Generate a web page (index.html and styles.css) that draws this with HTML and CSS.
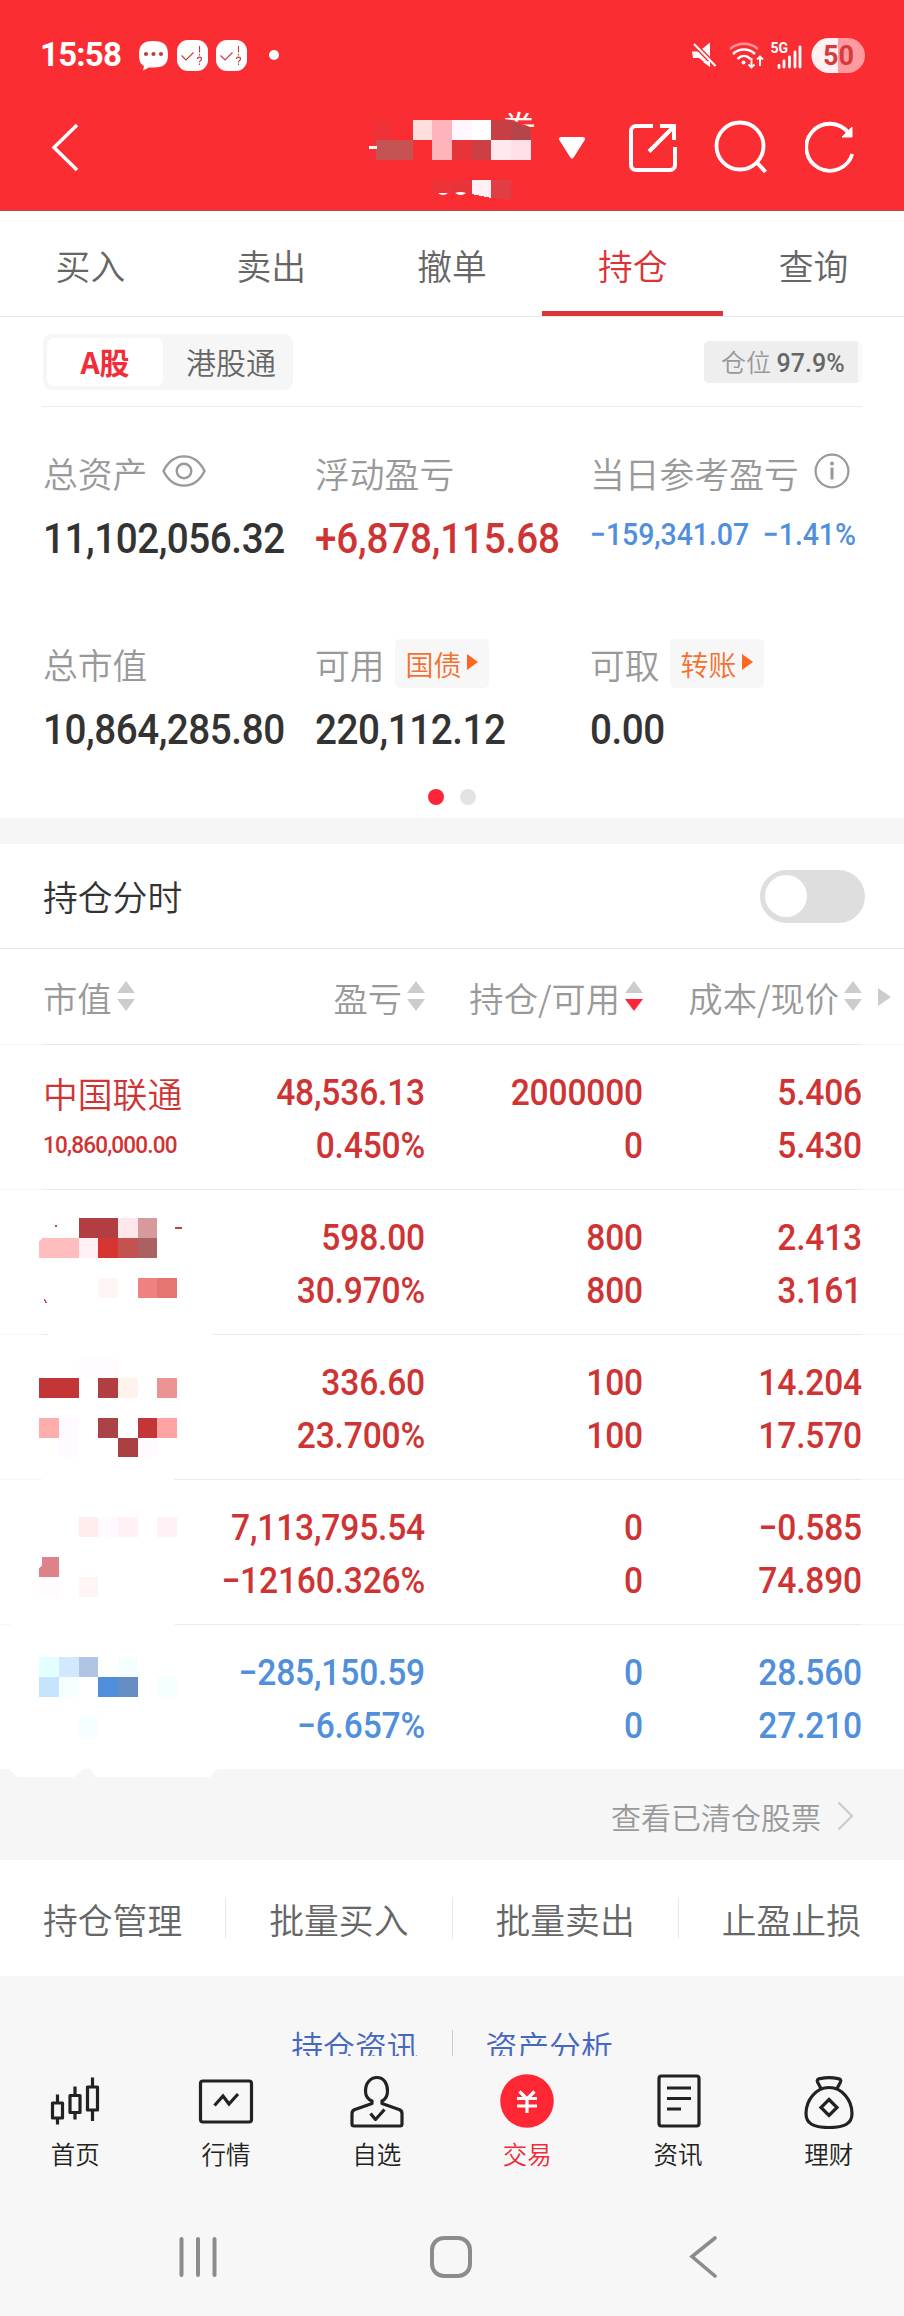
FILE: index.html
```html
<!DOCTYPE html>
<html lang="zh-CN">
<head>
    <meta charset="UTF-8">
    <title>持仓</title>
    <link rel="stylesheet" href="styles.css">
</head>
<body>
    <header class="header">
        <div class="status-bar">
            <span class="time">15:58</span>
            <svg class="status-left" width="146" height="36" viewBox="136 37 146 36">
                <path d="M153 41c11 0 15 4 15 13.500s-4 13-14 13h-5l-6 3 1-4.500c-3.500-2-5-5-5-11.500 0-9.500 4-13.500 14-13.500z" fill="#fff"/>
                <g fill="#c33a40"><circle cx="146" cy="54" r="2.100"/><circle cx="153.500" cy="54" r="2.100"/><circle cx="161" cy="54" r="2.100"/></g>
                <g id="task-icon">
                    <rect x="177" y="40" width="31" height="31" rx="11" fill="#fff"/>
                    <path d="M181.500 55.500l4.500 4.500 7.500-7.500M199.500 46v6.500M199.500 54v1.500M197.500 59c0-2.500 4-2.500 4 0 0 1.500-2 1.500-2 3.500M199.500 63.500v1.500" fill="none" stroke="#c33a40" stroke-width="1.100"/>
                </g>
                <use href="#task-icon" x="39"/>
                <circle cx="274" cy="55" r="5" fill="#fff"/>
            </svg>
            <svg class="status-right" width="178" height="40" viewBox="690 34 178 40">
                <path d="M692 50.500h7l11-9v24l-11-8.500h-6z" fill="#fff"/>
                <path d="M692 41l24 24.500" stroke="#fa2d33" stroke-width="5"/>
                <path d="M710 60v6l-7-5z" fill="#fff"/>
                <path d="M694 43l21.500 22" stroke="#fff" stroke-width="2.200"/>
                <path d="M730 48c8-7 20-7 28 0" fill="none" stroke="#ff9397" stroke-width="2.400"/>
                <path d="M733 53c6-6 16-6 22 0M737.500 58c4-4 9-4 13 0" fill="none" stroke="#fff" stroke-width="2.500"/>
                <circle cx="743.500" cy="61.500" r="2" fill="#fff"/>
                <path d="M751.500 57v9M748.500 63.500l3 3 3-3M760 65v-9M757 58.500l3-3 3 3" fill="none" stroke="#fff" stroke-width="1.900"/>
                <text x="770.500" y="52" class="net-label">5G</text>
                <path d="M779 64.500v2M784 60v6M789.500 56v10M795 51v15M800 46v20" stroke="#fff" stroke-width="2.800" stroke-linecap="round"/>
                <path d="M838 37h-9a17.500 17.500 0 0 0 0 35h9z" fill="#fff0f2"/>
                <path d="M838 37h9.500a17.500 17.500 0 0 1 0 35H838z" fill="#ff9ba0"/>
                <text x="838.500" y="64" text-anchor="middle" class="battery-label">50</text>
            </svg>
        </div>
        <div class="title-bar">
            <svg width="34" height="120" viewBox="48 90 34 120">
                <path d="M78 125L55 147.500 78 170" fill="none" stroke="#fff" stroke-width="3.500"/>
            </svg>
            <svg class="account" width="176" height="120" viewBox="364 90 176 120">
                <text x="501" y="142" class="account-name">券</text>
                <path d="M495 118l17 2 26 10v20h-43z" fill="#fa2d33"/>
                <!-- masked account name -->
                <g shape-rendering="crispEdges">
                    <path d="M373 120h20v20h-20z" fill="#f03138"/>
                    <path d="M413 120h19v20h-19z" fill="#ffdfdd"/>
                    <path d="M432 120h20v20h-20z" fill="#ffb4bd"/>
                    <path d="M452 120h20v20h-20z" fill="#fff6ff"/>
                    <path d="M472 120h19v20h-19z" fill="#fff"/>
                    <path d="M491 120h20v20h-20z" fill="#c73f43"/>
                    <path d="M511 121l20 7v12h-20z" fill="#b5454a"/>
                    <path d="M376 140h37v20h-37z" fill="#c55353"/>
                    <path d="M432 140h20v20h-20z" fill="#ffb4bb"/>
                    <path d="M452 140h20v20h-20z" fill="#e63438"/>
                    <path d="M472 140h19v20h-19z" fill="#cc4045"/>
                    <path d="M491 140h20v20h-20z" fill="#ffe9ee"/>
                    <path d="M511 140h20v20h-20z" fill="#ffe0e6"/>
                    <path d="M432 180h20v13h-20z" fill="#ed3338"/>
                    <path d="M452 180h20v13h-20z" fill="#e63438"/>
                    <path d="M472 180h19v18l-19-4z" fill="#fff0f5"/>
                    <path d="M491 180h20v20l-20-2z" fill="#e03e44"/>
                    <path d="M369 146h8v3h-8z" fill="#fff"/>
                </g>
                <path d="M438 193h10q-5 4-10 0zM455 193q6-2 11 0-5 4-11 0z" fill="#fff"/>
            </svg>
            <svg class="caret" width="28" height="120" viewBox="558 90 28 120">
                <path d="M561 139h22l-11 17.500z" fill="#fff" stroke="#fff" stroke-width="4" stroke-linejoin="round"/>
            </svg>
            <svg class="share" width="50" height="120" viewBox="628 90 50 120">
                <path d="M653 126h-17a5 5 0 0 0-5 5v34a5 5 0 0 0 5 5h34a5 5 0 0 0 5-5v-18M660 126h14v14M674 126.500L649 151.500" fill="none" stroke="#fff" stroke-width="4"/>
            </svg>
            <svg class="search" width="54" height="120" viewBox="714 90 54 120">
                <circle cx="740" cy="146" r="23.500" fill="none" stroke="#fff" stroke-width="3.800"/>
                <path d="M756.500 162l9 10" stroke="#fff" stroke-width="4"/>
            </svg>
            <svg class="refresh" width="51" height="120" viewBox="805 90 51 120">
                <path d="M848.500 133a23.500 23.500 0 1 0 3.800 21" fill="none" stroke="#fff" stroke-width="3.800"/>
                <path d="M852 127v10h-10z" fill="#fff" stroke="#fff"/>
            </svg>
        </div>
    </header>

    <nav class="tabs">
        <a class="tab">买入</a>
        <a class="tab">卖出</a>
        <a class="tab">撤单</a>
        <a class="tab active">持仓</a>
        <a class="tab">查询</a>
    </nav>

    <section class="summary">
        <div class="market-row">
            <div class="market-switch">
                <span class="market active">A股</span>
                <span class="market">港股通</span>
            </div>
            <div class="position">仓位 <b class="num">97.9%</b></div>
        </div>
        <div class="assets">
            <div class="asset">
                <div class="label">总资产
                    <svg class="eye" width="44" height="34" viewBox="0 0 44 34">
                        <path d="M1.500 17C11-2.500 33-2.500 42.500 17 33 36.500 11 36.500 1.500 17z" fill="none" stroke="#999" stroke-width="2.400"/>
                        <circle cx="22" cy="17" r="7.300" fill="none" stroke="#999" stroke-width="2.400"/>
                    </svg>
                </div>
                <div class="value num">11,102,056.32</div>
            </div>
            <div class="asset">
                <div class="label">浮动盈亏</div>
                <div class="value num profit up">+6,878,115.68</div>
            </div>
            <div class="asset">
                <div class="label">当日参考盈亏
                    <svg class="info" width="36" height="36" viewBox="0 0 36 36">
                        <circle cx="18" cy="18" r="16.400" fill="none" stroke="#999" stroke-width="2.200"/>
                        <path d="M18 14.500v12" stroke="#999" stroke-width="3"/>
                        <circle cx="18" cy="10.500" r="2" fill="#999"/>
                    </svg>
                </div>
                <div class="value num day down"><span>−159,341.07</span><span>−1.41%</span></div>
            </div>
            <div class="asset">
                <div class="label">总市值</div>
                <div class="value num">10,864,285.80</div>
            </div>
            <div class="asset">
                <div class="label">可用 <span class="tag">国债<i></i></span></div>
                <div class="value num">220,112.12</div>
            </div>
            <div class="asset">
                <div class="label">可取 <span class="tag">转账<i></i></span></div>
                <div class="value num">0.00</div>
            </div>
        </div>
        <div class="dots"><i class="on"></i><i></i></div>
    </section>

    <section class="holdings">
        <div class="chart-toggle">
            <span>持仓分时</span>
            <span class="switch"><i></i></span>
        </div>
        <div class="table-head">
            <span class="first">市值<i class="sort"></i></span>
            <span>盈亏<i class="sort"></i></span>
            <span>持仓/可用<i class="sort desc"></i></span>
            <span>成本/现价<i class="sort"></i></span>
            <i class="more"></i>
        </div>

        <div class="row up">
            <div class="stock">
                <div class="name">中国联通</div>
                <div class="worth num">10,860,000.00</div>
            </div>
            <div class="cell num">48,536.13<br>0.450%</div>
            <div class="cell num">2000000<br>0</div>
            <div class="cell num">5.406<br>5.430</div>
        </div>
        <div class="row up">
            <svg class="mask" width="220" height="144" viewBox="0 0 220 144" shape-rendering="crispEdges">
                <path d="M79 28h39v20H79z" fill="#b23e42"/>
                <path d="M118 28h20v20h-20z" fill="#ffe8ec"/>
                <path d="M138 28h19v20h-19z" fill="#d79a9c"/>
                <path d="M42 48h37v20H39V52z" fill="#ffbdc0"/>
                <path d="M79 48h19v20H79z" fill="#fff0f6"/>
                <path d="M98 48h20v20H98z" fill="#d63431"/>
                <path d="M118 48h20v20h-20z" fill="#c35250"/>
                <path d="M138 48h19v20h-19z" fill="#ab6062"/>
                <path d="M98 88h20v20H98z" fill="#fff5f5"/>
                <path d="M138 88h19v20h-19z" fill="#ee8281"/>
                <path d="M157 88h20v20h-20z" fill="#e67473"/>
                <path d="M175 37h7v2h-7zM55 35h2v2h-2zM44 109h1l2 4h-2z" fill="#c04444"/>
                <path d="M48 144h164v2H48z" fill="#fff"/>
            </svg>
            <div class="cell num">598.00<br>30.970%</div>
            <div class="cell num">800<br>800</div>
            <div class="cell num">2.413<br>3.161</div>
        </div>
        <div class="row up">
            <svg class="mask" width="220" height="144" viewBox="0 0 220 144" shape-rendering="crispEdges">
                <path d="M79 23h39v20H79z" fill="#fffbff"/>
                <path d="M39 43h40v20H39z" fill="#c43537"/>
                <path d="M98 43h20v20H98z" fill="#b23e42"/>
                <path d="M118 43h20v20h-20z" fill="#fff3ec"/>
                <path d="M157 43h20v20h-20z" fill="#ec9492"/>
                <path d="M39 83h20v20H39z" fill="#ffadad"/>
                <path d="M59 83h20v39H59zM138 103h19v19h-19z" fill="#fffaff"/>
                <path d="M98 83h20v20H98z" fill="#aa4248"/>
                <path d="M138 83h19v20h-19z" fill="#c43537"/>
                <path d="M157 83h20v20h-20z" fill="#ffa3a4"/>
                <path d="M118 103h20v19h-20z" fill="#a93f40"/>
                <path d="M42 144h132v2H42z" fill="#fff"/>
            </svg>
            <div class="cell num">336.60<br>23.700%</div>
            <div class="cell num">100<br>100</div>
            <div class="cell num">14.204<br>17.570</div>
        </div>
        <div class="row up">
            <svg class="mask" width="220" height="144" viewBox="0 0 220 144" shape-rendering="crispEdges">
                <path d="M79 37h19v20H79z" fill="#ffecec"/>
                <path d="M98 37h20v20H98z" fill="#fffaff"/>
                <path d="M118 37h20v20h-20zM157 37h20v20h-20z" fill="#fff1f5"/>
                <path d="M42 77h17v20H39v-9l3-3z" fill="#dc8288"/>
                <path d="M39 97h20v20H39z" fill="#fffbff"/>
                <path d="M79 97h19v20H79z" fill="#fff5f5"/>
                <path d="M11 144h164v2H11z" fill="#fff"/>
            </svg>
            <div class="cell num">7,113,795.54<br>−12160.326%</div>
            <div class="cell num">0<br>0</div>
            <div class="cell num">−0.585<br>74.890</div>
        </div>
        <div class="row down">
            <svg class="mask" width="220" height="144" viewBox="0 0 220 144" shape-rendering="crispEdges">
                <path d="M39 32h20v20H39z" fill="#e3ffff"/>
                <path d="M59 32h20v20H59z" fill="#d3e7ff"/>
                <path d="M79 32h19v20H79z" fill="#aec5e3"/>
                <path d="M118 32h20v20h-20zM59 52h20v20H59zM157 52h20v20h-20zM79 92h19v20H79z" fill="#f6ffff"/>
                <path d="M39 52h20v20H39z" fill="#c5e5ff"/>
                <path d="M98 52h20v20H98z" fill="#508fde"/>
                <path d="M118 52h20v20h-20z" fill="#638dc3"/>
                <path d="M10 144h72l-7 8H17zM91 144h126l-6 8H95z" fill="#fff"/>
            </svg>
            <div class="cell num">−285,150.59<br>−6.657%</div>
            <div class="cell num">0<br>0</div>
            <div class="cell num">28.560<br>27.210</div>
        </div>
    </section>

    <div class="cleared">
        <span>查看已清仓股票</span>
        <svg width="18" height="30" viewBox="0 0 18 30">
            <path d="M1.500 1.500L15 15 1.500 28.500" fill="none" stroke="#ccc" stroke-width="2.400"/>
        </svg>
    </div>

    <div class="actions">
        <a>持仓管理</a>
        <a>批量买入</a>
        <a>批量卖出</a>
        <a>止盈止损</a>
    </div>

    <div class="links">
        <a>持仓资讯</a>
        <a>资产分析</a>
    </div>

    <footer class="bottom">
        <div class="bottom-tabs">
            <a class="bottom-tab">
                <svg width="56" height="56" viewBox="47 2073 56 56" fill="none" stroke="#222" stroke-width="3.200">
                    <path d="M52.500 2103h10v15h-10zM70 2095.500h10v17H70zM87.500 2087h10v23h-10z" stroke-linejoin="round"/>
                    <path d="M57.500 2094.500v8M57.500 2118v6.500M75 2086.500v8M75 2113v6.500M92.500 2077.500v9M92.500 2110v11"/>
                </svg>
                首页
            </a>
            <a class="bottom-tab">
                <svg width="56" height="56" viewBox="198 2073 56 56" fill="none" stroke="#222" stroke-width="3.200">
                    <rect x="200.500" y="2081" width="51" height="41" rx="2.500"/>
                    <path d="M214.500 2105.500l8.500-9.500 6 8 9-10"/>
                </svg>
                行情
            </a>
            <a class="bottom-tab">
                <svg width="56" height="56" viewBox="349 2073 56 56" fill="none" stroke="#222" stroke-width="3.200" stroke-linejoin="round">
                    <path d="M372 2101v2.500l-17 6q-3 1-3 4v10.500q0 2 2 2h46q2 0 2-2v-10.500q0-3-3-4l-17-6v-2.500c4-2 5.500-5 5.500-10 0-8-4-13.500-10.500-13.500s-11.500 5.500-11.500 13.500c0 5 1.500 8 6.500 10z"/>
                    <path d="M370.500 2113.500l5 6 9-10"/>
                </svg>
                自选
            </a>
            <a class="bottom-tab active">
                <svg width="56" height="56" viewBox="500 2073 56 56">
                    <circle cx="528" cy="2101" r="26.800" fill="#ff2734"/>
                    <path d="M520.500 2091.500l7.500 7.500 7.500-7.500M518 2098.500h20M518 2106h20M528 2098.500v14.500" fill="none" stroke="#fff" stroke-width="3.200"/>
                </svg>
                交易
            </a>
            <a class="bottom-tab">
                <svg width="56" height="56" viewBox="650 2073 56 56" fill="none" stroke="#222" stroke-width="3.200">
                    <rect x="659" y="2076" width="40" height="50" rx="2.500"/>
                    <path d="M667 2088h24M667 2098.500h24M667 2109h14"/>
                </svg>
                资讯
            </a>
            <a class="bottom-tab">
                <svg width="56" height="56" viewBox="801 2073 56 56" fill="none" stroke="#222" stroke-width="3.200">
                    <path d="M829 2087.500c13 0 23 12.500 23 26 0 10-7 14-23 14s-23-4-23-14c0-13.500 10-26 23-26z"/>
                    <path d="M821 2088.500l-3.500-6.500c-1-2 .5-3 2.500-3.400q9-2 18 0c2 .4 3.500 1.400 2.500 3.400l-3.500 6.500M829 2099.500l8 8-8 8-8-8z"/>
                </svg>
                理财
            </a>
        </div>
        <div class="system-nav">
            <svg width="42" height="44" viewBox="177 2235 42 44">
                <path d="M181.500 2239v36M198 2239v36M214.500 2239v36" stroke="#8c8c8c" stroke-width="4" stroke-linecap="round"/>
            </svg>
            <svg class="home" width="44" height="44" viewBox="429 2235 44 44">
                <rect x="432" y="2238" width="38" height="38" rx="12" fill="none" stroke="#8c8c8c" stroke-width="4"/>
            </svg>
            <svg width="30" height="44" viewBox="689 2235 30 44">
                <path d="M715 2238l-23 18.500 23 19.500" fill="none" stroke="#8c8c8c" stroke-width="3.600" stroke-linecap="round"/>
            </svg>
        </div>
    </footer>
</body>
</html>
```
FILE: styles.css
```css
* {
    box-sizing: border-box;
}
body {
    margin: 0;
    width: 904px;
    height: 2316px;
    overflow: hidden;
    background: #fff;
    color: #333;
    font-family: "Noto Sans CJK SC", sans-serif;
    font-size: 34.800px;
    font-weight: 350;
    line-height: 40px;
}
svg {
    display: block;
    flex: none;
}
.num {
    font-family: Roboto, sans-serif;
    font-weight: 500;
}
.up {
    color: #cf3434;
}
.down {
    color: #508fdc;
}

/* header */
.header {
    height: 211px;
    background: #fa2d33;
    border-bottom: 1px solid #b54a50;
    color: #fff;
}
.status-bar {
    display: flex;
    align-items: center;
    height: 90px;
    padding: 19px 36px 0 40px;
}
.time {
    width: 96px;
    font: 700 33px/40px Roboto, sans-serif;
    letter-spacing: -0.800px;
}
.status-right {
    margin-left: auto;
}
.net-label {
    font: 700 14px Roboto, sans-serif;
    fill: #fff;
}
.battery-label {
    font: 700 27px Roboto, sans-serif;
    fill: #d63a3d;
}
.account-name {
    font: 400 35px "Noto Sans CJK SC", sans-serif;
    fill: #fff;
}
.title-bar {
    display: flex;
    padding: 0 48px 0 47px;
}
.account {
    margin-left: auto;
}
.caret {
    margin-left: 18px;
}
.share {
    margin-left: 42px;
}
.search {
    margin-left: 36px;
}
.refresh {
    margin-left: 37px;
}

/* tabs */
.tabs {
    display: flex;
    height: 106px;
    border-bottom: 1px solid #ebebeb;
}
.tab {
    flex: 1;
    height: 105px;
    padding-top: 34px;
    text-align: center;
    color: #666;
}
.tab.active {
    color: #dc3335;
    border-bottom: 5px solid #dc3539;
}

/* summary */
.summary {
    height: 501px;
    padding: 0 42px;
}
.market-row {
    display: flex;
    justify-content: space-between;
    align-items: center;
    height: 90px;
    border-bottom: 1px solid #eee;
}
.market-switch {
    display: flex;
    width: 250px;
    height: 56px;
    margin-left: 1px;
    padding: 4px;
    border-radius: 9px;
    background: #f6f6f6;
    font-size: 30px;
    line-height: 47px;
    color: #666;
}
.market {
    flex: 1;
    padding-left: 10px;
    text-align: center;
}
.market.active {
    flex: none;
    width: 116px;
    padding-left: 0;
    border-radius: 7px;
    background: #fff;
    color: #f22d3a;
    font-weight: 700;
}
.position {
    width: 158px;
    height: 42px;
    padding-left: 17px;
    border-right: 4px solid #fafafa;
    border-radius: 5px;
    background: #eee;
    font-size: 25px;
    line-height: 40px;
    color: #999;
    white-space: nowrap;
}
.position .num {
    color: #666;
}
.assets {
    display: grid;
    grid-template-columns: 272px 275px 1fr;
    grid-template-rows: 191px 191px;
    padding: 44px 0 0 1px;
}
.label {
    display: flex;
    align-items: center;
    height: 43px;
    color: #999;
    white-space: nowrap;
}
.eye {
    margin: -4px 0 0 15px;
}
.info {
    margin: -4px 0 0 15px;
}
.value {
    margin-top: 23px;
    height: 44px;
    font-size: 42px;
    line-height: 44px;
    letter-spacing: -0.500px;
    white-space: nowrap;
    transform: scaleX(0.92);
    transform-origin: left;
}
.value.profit {
    letter-spacing: -0.200px;
}
.value.day {
    display: flex;
    gap: 15px;
    margin-top: 19px;
    font-size: 31px;
    letter-spacing: -0.100px;
}
.tag {
    display: flex;
    align-items: center;
    height: 49px;
    margin-left: 10px;
    padding: 0 11px;
    border-radius: 5px;
    background: #f7f7f7;
    color: #f4702f;
    font-size: 28px;
}
.tag i {
    margin: -3px 0 0 5px;
    border: 8px solid transparent;
    border-left: 11px solid #ff6720;
    border-right: 0;
}
.dots {
    display: flex;
    justify-content: center;
    gap: 16px;
    margin-top: -44px;
}
.dots i {
    width: 16px;
    height: 16px;
    border-radius: 50%;
    background: #e5e2e6;
}
.dots .on {
    background: #fd2638;
}

/* holdings */
.holdings {
    border-top: 26px solid #f6f6f6;
}
.chart-toggle {
    display: flex;
    justify-content: space-between;
    align-items: center;
    height: 105px;
    padding: 0 39px 0 43px;
    border-bottom: 1px solid #ebebeb;
    line-height: 42px;
}
.switch {
    width: 105px;
    height: 53px;
    padding: 5px;
    border-radius: 27px;
    background: #dedede;
}
.switch i {
    display: block;
    width: 42px;
    height: 42px;
    border-radius: 50%;
    background: #fff;
}
.table-head,
.row {
    position: relative;
    display: grid;
    grid-template-columns: 220px 205px 218px 219px 1fr;
}
.table-head::after,
.row:not(:last-child)::after {
    content: "";
    grid-column: 1 / -1;
    height: 1px;
    background: linear-gradient(to right, #f6f6f6 42px, #ebebeb 42px, #ebebeb 862px, #f6f6f6 862px);
}
.table-head {
    grid-template-rows: 95px 1px;
    align-items: center;
    color: #999;
    font-size: 34.300px;
    line-height: 42px;
}
.table-head span {
    display: flex;
    justify-content: flex-end;
    align-items: center;
    white-space: nowrap;
}
.table-head .first {
    justify-content: flex-start;
    padding-left: 43px;
}
.sort {
    margin: -1px 0 0 5px;
}
.sort::before,
.sort::after {
    content: "";
    display: block;
    border: 9px solid transparent;
}
.sort::before {
    border-top: 0;
    border-bottom: 12px solid #ccc;
    margin-bottom: 6px;
}
.sort::after {
    border-bottom: 0;
    border-top: 12px solid #ccc;
}
.sort.desc::after {
    border-top-color: #fd2638;
}
.more {
    justify-self: start;
    margin-left: 16px;
    border: 9px solid transparent;
    border-left: 13px solid #ccc;
    border-right: 0;
}
.row {
    grid-template-rows: 144px 1px;
}
.row:last-child {
    grid-template-rows: 144px;
}
.stock {
    padding: 28px 0 0 43px;
}
.name {
    height: 40px;
}
.worth {
    margin-top: 12px;
    font-size: 24.500px;
    letter-spacing: -0.900px;
    transform: scaleX(0.92);
    transform-origin: left;
}
.mask {
    position: relative;
    z-index: 1;
    overflow: visible;
}
.cell {
    margin-left: -30px;
    padding-top: 21px;
    text-align: right;
    font-size: 36.500px;
    line-height: 53px;
    letter-spacing: -0.200px;
    white-space: nowrap;
    transform: scaleX(0.92);
    transform-origin: right;
}

.cleared {
    display: flex;
    justify-content: flex-end;
    align-items: center;
    gap: 16px;
    height: 91px;
    padding: 3px 49px 0 0;
    background: #f6f6f6;
    color: #999;
    font-size: 30px;
}
.actions {
    display: flex;
    height: 116px;
    padding: 37px 0;
    color: #666;
}
.actions a {
    flex: 1;
    text-align: center;
    line-height: 45px;
}
.actions a + a {
    border-left: 1px solid #e8e8e8;
}
.links {
    display: flex;
    justify-content: center;
    height: 80px;
    padding-top: 54px;
    overflow: hidden;
    background: #f7f7f7;
    color: #4668c0;
    font-size: 31.800px;
    line-height: 30px;
}
.links a {
    padding: 0 33px;
}
.links a + a {
    border-left: 1px solid #ccc;
}

/* bottom bar */
.bottom {
    height: 260px;
    background: #f7f7f7;
}
.bottom-tabs {
    display: flex;
    height: 144px;
    padding-top: 17px;
}
.bottom-tab {
    flex: 1;
    display: flex;
    flex-direction: column;
    align-items: center;
    gap: 5px;
    font-size: 24.500px;
    color: #222;
}
.bottom-tab.active {
    color: #ee2c3a;
}
.system-nav {
    display: flex;
    padding: 35px 185px 0 177px;
}
.home {
    margin: 0 auto 0 210px;
}
```
